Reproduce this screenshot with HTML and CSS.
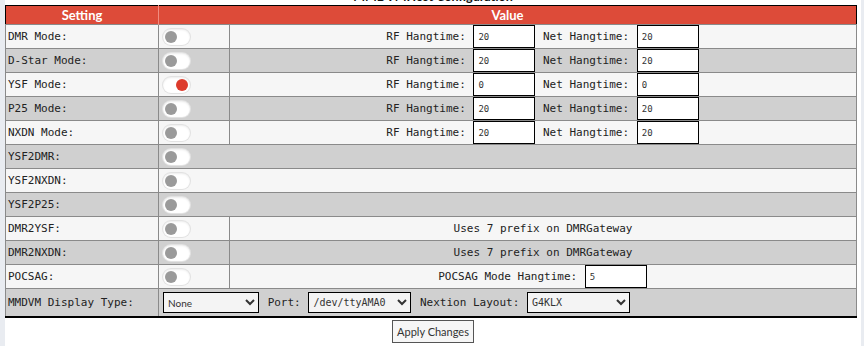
FILE: index.html
```html
<!DOCTYPE html>
<html lang="en">
<head>
  <meta charset="UTF-8">
  <title>MMDVMHost Configuration</title>
  <link rel="stylesheet" href="styles.css">
</head>
<body>
  <div class="page">
    <div class="title">MMDVMHost Configuration</div>
    <table class="config">
      <tr>
        <th class="col-setting">Setting</th>
        <th colspan="2">Value</th>
      </tr>
      <tr>
        <td class="label">DMR Mode:</td>
        <td class="sw"><span class="toggle"><span class="knob"></span></span></td>
        <td class="val">RF Hangtime: <input type="text" value="20"> Net Hangtime: <input type="text" value="20"></td>
      </tr>
      <tr>
        <td class="label">D-Star Mode:</td>
        <td class="sw"><span class="toggle"><span class="knob"></span></span></td>
        <td class="val">RF Hangtime: <input type="text" value="20"> Net Hangtime: <input type="text" value="20"></td>
      </tr>
      <tr>
        <td class="label">YSF Mode:</td>
        <td class="sw"><span class="toggle on"><span class="knob"></span></span></td>
        <td class="val">RF Hangtime: <input type="text" value="0"> Net Hangtime: <input type="text" value="0"></td>
      </tr>
      <tr>
        <td class="label">P25 Mode:</td>
        <td class="sw"><span class="toggle"><span class="knob"></span></span></td>
        <td class="val">RF Hangtime: <input type="text" value="20"> Net Hangtime: <input type="text" value="20"></td>
      </tr>
      <tr>
        <td class="label">NXDN Mode:</td>
        <td class="sw"><span class="toggle"><span class="knob"></span></span></td>
        <td class="val">RF Hangtime: <input type="text" value="20"> Net Hangtime: <input type="text" value="20"></td>
      </tr>
      <tr>
        <td class="label">YSF2DMR:</td>
        <td class="sw" colspan="2"><span class="toggle"><span class="knob"></span></span></td>
      </tr>
      <tr>
        <td class="label">YSF2NXDN:</td>
        <td class="sw" colspan="2"><span class="toggle"><span class="knob"></span></span></td>
      </tr>
      <tr>
        <td class="label">YSF2P25:</td>
        <td class="sw" colspan="2"><span class="toggle"><span class="knob"></span></span></td>
      </tr>
      <tr>
        <td class="label">DMR2YSF:</td>
        <td class="sw"><span class="toggle"><span class="knob"></span></span></td>
        <td class="val">Uses 7 prefix on DMRGateway</td>
      </tr>
      <tr>
        <td class="label">DMR2NXDN:</td>
        <td class="sw"><span class="toggle"><span class="knob"></span></span></td>
        <td class="val">Uses 7 prefix on DMRGateway</td>
      </tr>
      <tr>
        <td class="label">POCSAG:</td>
        <td class="sw"><span class="toggle"><span class="knob"></span></span></td>
        <td class="val">POCSAG Mode Hangtime: <input type="text" value="5"></td>
      </tr>
      <tr class="display">
        <td class="label">MMDVM Display Type:</td>
        <td class="opts" colspan="2">
          <select class="sel-type"><option>None</option></select>
          <span class="opt-label">Port:</span>
          <select class="sel-port"><option>/dev/ttyAMA0</option></select>
          <span class="opt-label">Nextion Layout:</span>
          <select class="sel-layout"><option>G4KLX</option></select>
        </td>
      </tr>
    </table>
    <div class="actions">
      <button type="button">Apply Changes</button>
    </div>
  </div>
</body>
</html>
```

FILE: styles.css
```css
body {
  margin: 0;
  background: #e9ecf1;
  font-family: "DejaVu Sans Mono", monospace;
  font-size: 11px;
  color: #222;
}
.page {
  display: flow-root;
  margin-left: 5px;
  width: 856px;
  height: 346px;
  background: #fff;
}
.title {
  font-family: Lato, "Open Sans", sans-serif;
  font-weight: bold;
  font-size: 12.5px;
  line-height: 16px;
  height: 16px;
  margin-top: -11px;
  text-align: center;
  color: #111;
}
.config {
  width: 852px;
  border-collapse: collapse;
  border: 1px solid #000;
  border-bottom: 2px solid #000;
}
.config th {
  background: #dd4b39;
  color: #fff;
  font-family: Lato, "Open Sans", sans-serif;
  font-size: 13px;
  font-weight: bold;
  height: 18px;
  padding: 0;
  text-align: center;
}
.config th.col-setting {
  width: 152px;
  border-right: 1px solid #f08c80;
}
.config td {
  height: 23px;
  padding: 0 2px;
  border: 1px solid #8a8a8a;
  white-space: nowrap;
}
.config tr:nth-child(even) td {
  background: #f6f6f6;
}
.config tr:nth-child(odd) td {
  background: #d0d0d0;
}
.sw {
  width: 64px;
  padding-left: 4px !important;
}
.val {
  text-align: center;
}
.val input {
  width: 62px;
  height: 23px;
  box-sizing: border-box;
  border: 1px solid #000;
  background: #fff;
  font-family: "DejaVu Sans Mono", monospace;
  font-size: 9px;
  color: #333;
  padding: 0 4px;
  margin: 0 1px;
  vertical-align: middle;
}
.toggle {
  display: inline-block;
  position: relative;
  width: 27px;
  height: 16px;
  border-radius: 8px;
  background: #fff;
  box-shadow: 0 0 0 1px #e2e2e2, inset 0 1px 2px rgba(0,0,0,0.08);
  vertical-align: middle;
}
.knob {
  position: absolute;
  top: 2px;
  left: 2px;
  width: 12px;
  height: 12px;
  border-radius: 50%;
  background: #9a9a9a;
}
.toggle.on .knob {
  left: 13px;
  background: #dd3b2c;
}
.display td {
  height: 27px;
}
.opts {
  padding-left: 4px !important;
}
.opts select {
  height: 21px;
  border: 1px solid #000;
  border-radius: 0;
  background: #f4f4f4;
  font-size: 10px;
  color: #333;
  vertical-align: middle;
  margin: 0;
}
.sel-type {
  width: 96px;
  font-family: Lato, "Open Sans", sans-serif;
}
.sel-port,
.sel-layout {
  width: 103px;
  font-family: "DejaVu Sans Mono", monospace;
}
.opt-label {
  margin: 0 1px 0 2px;
}
.actions {
  text-align: center;
  margin-top: 2px;
}
.actions button {
  font-family: Lato, "Open Sans", sans-serif;
  font-size: 11px;
  color: #333;
  background: #f6f6f6;
  border: 1px solid #555;
  border-radius: 0;
  padding: 3px 4px;
  height: 23px;
}
```
